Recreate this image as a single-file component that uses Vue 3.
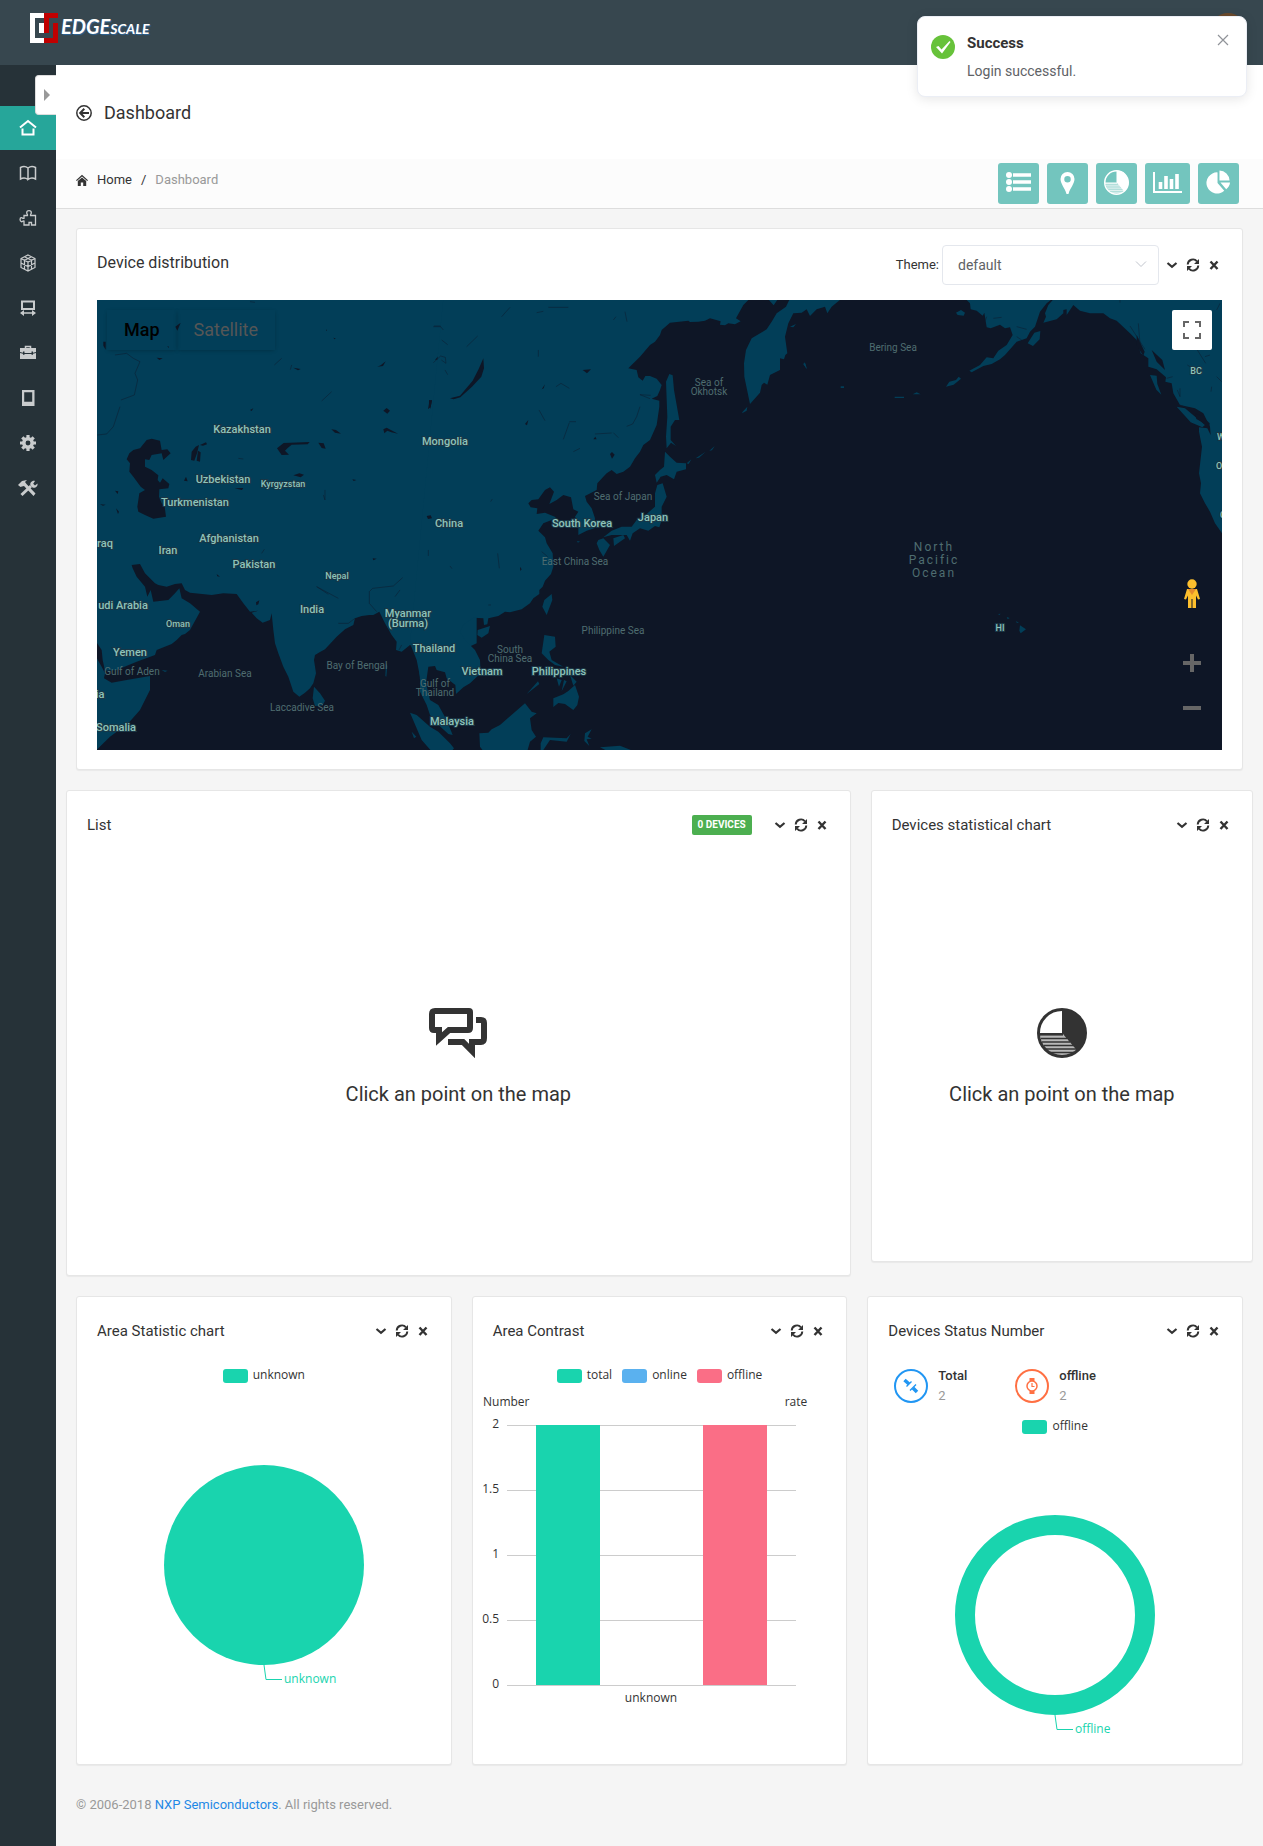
<script setup>
import { ref } from 'vue'

const theme = ref('default')

const navItems = ['home', 'book', 'puzzle', 'cube', 'device', 'case', 'tablet', 'gear', 'tools']

// Label positions in the map's own units
const countries = [
  ['Kazakhstan', 145, 133], ['Mongolia', 348, 145], ['Uzbekistan', 126, 183],
  ['Turkmenistan', 98, 206], ['China', 352, 227], ['Afghanistan', 132, 242],
  ['Iran', 71, 254], ['Pakistan', 157, 268], ['India', 215, 313],
  ['Myanmar', 311, 317], ['(Burma)', 311, 327], ['Thailand', 337, 352],
  ['Vietnam', 385, 375], ['Philippines', 462, 375], ['Malaysia', 355, 425],
  ['South Korea', 485, 227], ['Japan', 556, 221], ['udi Arabia', 26, 309],
  ['Yemen', 33, 356], ['Somalia', 19, 431], ['raq', 8, 247], ['ia', 3, 398]
]
const smallPlaces = [
  ['Kyrgyzstan', 186, 187], ['Nepal', 240, 279], ['Oman', 81, 327],
  ['BC', 1099, 74], ['HI', 903, 331], ['W', 1124, 140], ['O', 1122, 169], ['C', 1126, 218]
]
const waters = [
  ['Gulf of Aden', 35, 375], ['Arabian Sea', 128, 377], ['Bay of Bengal', 260, 369],
  ['Laccadive Sea', 205, 411], ['Gulf of', 338, 387], ['Thailand', 338, 396],
  ['South', 413, 353], ['China Sea', 413, 362], ['Philippine Sea', 516, 334],
  ['East China Sea', 478, 265], ['Sea of Japan', 526, 200], ['Sea of', 612, 86],
  ['Okhotsk', 612, 95], ['Bering Sea', 796, 51]
]

const green = '#19d4ae'
const legend = [
  { name: 'total', color: green },
  { name: 'online', color: '#5ab1ef' },
  { name: 'offline', color: '#fa6e86' }
]
const ticks = [2, 1.5, 1, 0.5, 0]
const bars = [
  { x: 63, value: 2, color: green },
  { x: 230, value: 2, color: '#fa6e86' }
]
</script>

<template>
  <svg class="defs" aria-hidden="true">
    <symbol id="i-down" viewBox="0 0 16 16"><path d="M3.500 6 8 9.800 12.500 6" fill="none" stroke="currentColor" stroke-width="2.200" /></symbol>
    <symbol id="i-refresh" viewBox="0 0 16 16">
      <path d="M2.700 7.500A5.300 5.300 0 0 1 12 4.300M13.300 8.500A5.300 5.300 0 0 1 4 11.700" fill="none" stroke="currentColor" stroke-width="1.900" />
      <path d="M14 2v5H9zM2 14V9h5z" fill="currentColor" />
    </symbol>
    <symbol id="i-close" viewBox="0 0 16 16"><path d="M4.500 4.500l7 7.500M11.500 4.500l-7 7.500" fill="none" stroke="currentColor" stroke-width="2.400" /></symbol>

    <symbol id="i-home" viewBox="0 0 20 20"><path d="M2 9.500 10 3l8 6.500M4.500 10.500v6h11v-6" fill="none" stroke="currentColor" stroke-width="2" /></symbol>
    <symbol id="i-book" viewBox="0 0 20 20"><path d="M10 5C8 3.500 4.500 3.500 2.500 4.500v11.500C4.500 15 8 15 10 16.500M10 5c2-1.500 5.500-1.500 7.500-.5v11.500c-2-1-5.500-1-7.500.5z M10 5v11" fill="none" stroke="currentColor" stroke-width="1.500" /></symbol>
    <symbol id="i-puzzle" viewBox="0 0 20 20"><path d="M6 7.500h3.500c.5-1-.8-1.300-.8-2.800 0-2.800 4.600-2.800 4.600 0 0 1.500-1.300 1.800-.8 2.800H17.500v9.500h-4v-2.500h-2.500V17H6v-4c-1.200-.5-1.500 1-2.600.7-1.800-.5-1.800-4 0-4 1.100 0 1.400 1 2.600.6z" fill="none" stroke="currentColor" stroke-width="1.300" /></symbol>
    <symbol id="i-cube" viewBox="0 0 20 20"><path d="M10 2l7 3.500v9L10 18l-7-3.500v-9zM3 5.500 10 9l7-3.500M10 9v9M6.500 3.800l7 3.500v9M13.500 3.800l-7 3.500v9M3 10l7 3.500L17 10" fill="none" stroke="currentColor" stroke-width="1.200" /></symbol>
    <symbol id="i-device" viewBox="0 0 20 20"><path d="M4 3.500h12v7.500H4z" fill="none" stroke="currentColor" stroke-width="2" /><path d="M3.500 15h13" fill="none" stroke="currentColor" stroke-width="1.500" /><path d="M2 15l4-3v6zM18 15l-4-3v6z" fill="currentColor" /></symbol>
    <symbol id="i-case" viewBox="0 0 20 20"><path d="M7.500 5V3.500h5V5" fill="none" stroke="currentColor" stroke-width="1.500" /><path d="M2 5h16v4l-3 .8V8.500h-1.500v1.600h-7V8.500H5v1.300L2 9zM2 10l3 .8v1h1.500v-.7h7v.7H15v-1l3-.8v6H2z" fill="currentColor" /></symbol>
    <symbol id="i-tablet" viewBox="0 0 20 20"><path fill-rule="evenodd" d="M4 2h12.500v16H4zM6.200 4.200v9.600h8V4.200z" fill="currentColor" /></symbol>
    <symbol id="i-gear" viewBox="0 0 20 20"><path d="M10 2v16M2 10h16M4.300 4.300l11.400 11.400M15.700 4.300 4.300 15.700" stroke="currentColor" stroke-width="3.200" /><circle cx="10" cy="10" r="4.200" fill="#263238" stroke="currentColor" stroke-width="3.500" /></symbol>
    <symbol id="i-tools" viewBox="0 0 20 20"><path d="M0 7l4-4 5-1-2 2 1.500 2L17.500 15.500 15.500 18 6 8 4 8.500 2.500 9z" fill="currentColor" /><path d="M3.500 17 13 8" stroke="currentColor" stroke-width="3" /><path d="M19.500 5.500 17 7.500l-1.800-1.800L17 3c-3-.8-5.500 2-4.500 4.500l2 2c2.800 1 5.500-1 5-4z" fill="currentColor" /></symbol>

    <symbol id="i-pie" viewBox="0 0 50 50">
      <circle cx="25" cy="25" r="23.500" fill="none" stroke="currentColor" stroke-width="3" />
      <path d="M25 25V1a24 24 0 0 1 15.500 42z" fill="currentColor" />
      <path d="M2 26.300h24" stroke="currentColor" stroke-width="2.600" />
      <path d="M3 27h24l14 14-9 7H17Q5 42 3 27z" fill="currentColor" opacity=".35" />
      <path d="M4 30.500h26M5 34h28M7 37.500h30M9 41h31M13 44.500h24" stroke="currentColor" stroke-width="1.300" />
    </symbol>
  </svg>

  <div class="page">
    <header class="topbar">
      <a class="logo" href="#" aria-label="EdgeScale">
        <svg width="28" height="30" viewBox="0 0 28 30">
          <path d="M14 0H0v30h14v-5H5V5h9z" fill="#fff" /><path d="M9 10h5v10H9z" fill="#fff" />
          <path d="M14 0h14v5h-9v15h-5zM23 10h5v20H14v-5h9z" fill="#c00000" />
        </svg>
        <span class="brand">EDGE<small>SCALE</small></span>
      </a>
      <span class="avatar"></span>
    </header>

    <div class="shell">
      <nav class="sidebar">
        <button class="handle" aria-label="Expand menu"><svg width="6" height="12"><path d="M0 0l6 6-6 6z" fill="#999" /></svg></button>
        <a v-for="(item, i) in navItems" :key="item" href="#" :class="['nav', { active: i === 0 }]" :aria-label="item">
          <svg width="20" height="20"><use :href="'#i-' + item" /></svg>
        </a>
      </nav>

      <main class="main">
        <div class="heading">
          <svg width="16" height="16" viewBox="0 0 16 16" fill="none" stroke="currentColor"><circle cx="8" cy="8" r="7.200" stroke-width="1.500" /><path d="M13 8H4.500M8.300 3.800 4.200 8l4.100 4.200" stroke-width="2" /></svg>
          <h1>Dashboard</h1>
        </div>

        <div class="crumbbar">
          <div class="crumbs">
            <svg width="12" height="12" viewBox="0 0 12 12"><path d="M0 6.200 6 .8l6 5.400-.8.800L6 2.500.8 7z" fill="currentColor" /><path d="M1.800 7 6 3.500 10.200 7v5H7.200V8.500H4.800V12h-3z" fill="currentColor" /></svg>
            <a href="#">Home</a><span>/</span><span class="muted">Dashboard</span>
          </div>
          <div class="shortcuts">
            <button aria-label="List"><svg width="25" height="20" viewBox="0 0 25 20"><g fill="#fff"><circle cx="3" cy="3" r="3" /><circle cx="3" cy="10" r="3" /><circle cx="3" cy="17" r="3" /></g><path d="M7 3h18M7 10h18M7 17h18" stroke="#fff" stroke-width="3.600" /></svg></button>
            <button aria-label="Map"><svg width="25" height="22" viewBox="0 0 25 22"><path fill-rule="evenodd" d="M12.500 0a7 7 0 0 1 7 7c0 5-4.500 9-6 15h-2c-1.500-6-6-10-6-15a7 7 0 0 1 7-7zm0 4a3 3 0 1 0 0 6.500 3 3 0 0 0 0-6.500z" fill="#fff" /></svg></button>
            <button class="low" aria-label="Statistical chart"><svg width="25" height="25"><use href="#i-pie" /></svg></button>
            <button aria-label="Bars"><svg width="29" height="21" viewBox="0 0 29 21"><path d="M1 0v20h28" fill="none" stroke="#fff" stroke-width="2" /><path d="M7.500 17v-7M13 17V4M18.500 17V7M24 17V2" stroke="#fff" stroke-width="3.600" /></svg></button>
            <button class="low" aria-label="Pie"><svg width="25" height="24" viewBox="0 0 26 24"><path d="M12 2v11l7 8A11 11 0 1 1 12 2zM14 0a11 11 0 0 1 10.500 10.500H14zM15 12.500h10a10 10 0 0 1-4 7z" fill="#fff" /></svg></button>
          </div>
        </div>

        <div class="content">
          <section class="card">
            <div class="card-head">
              <h2 class="lead">Device distribution</h2>
              <div class="tools">
                <label for="theme">Theme:</label>
                <span class="select">
                  <select id="theme" v-model="theme"><option>default</option></select>
                  <svg width="12" height="7" viewBox="0 0 12 7"><path d="M1 .5l5 5 5-5" fill="none" stroke="#c0c4cc" /></svg>
                </span>
                <button v-for="t in ['down', 'refresh', 'close']" :key="t" class="tool" :aria-label="t"><svg width="16" height="16"><use :href="'#i-' + t" /></svg></button>
              </div>
            </div>

            <div class="map">
              <svg class="world" viewBox="0 0 1125 450" preserveAspectRatio="xMidYMid slice" role="img" aria-label="World map">
                <g transform="translate(-7 -10) scale(.333333)">
                  <path class="land" d="M15 25H1160V1060L1010 1130 990 1170 985 1110 970 1070 960 1065 935 1085 918 1080 920 1055 905 1035 885 1000 868 965 850 975 838 975 815 978 795 985 790 1005 765 1018 740 1040 705 1078 690 1086 675 1095 672 1110 678 1150 670 1180 660 1195 645 1208 628 1220 610 1205 595 1160 580 1130 565 1090 555 1060 550 1020 545 970 540 990 518 998 500 985 485 968 505 962 480 965 460 940 440 912 400 910 365 915 300 908 285 900 275 880 255 882 230 890 205 885 195 880 180 865 165 850 150 822 125 825 128 835 140 860 165 890 172 920 182 900 190 935 235 930 255 910 268 895 275 925 300 940 330 965 300 1020 285 1032 275 1035 260 1050 245 1062 200 1080 195 1095 140 1115 80 1140 45 1142 38 1110 35 1080 15 1050z" />
                  <path class="land" d="M15 1095 35 1130 45 1150 42 1165 65 1178 110 1170 180 1158 180 1200 150 1260 115 1300 60 1340 15 1384z" />
                  <path class="land" d="M672 1190 690 1210 705 1232 698 1246 675 1248 668 1225zM215 1140l18 2-8 4z M888 1118l4 10-3 32-3-2z" />
                  <path class="water" d="M170 450 185 446 210 452 215 480 232 478 242 490 220 510 215 490 185 495 178 510 165 508 165 530 185 540 205 556 203 570 210 578 218 565 238 582 235 595 208 598 207 620 215 640 224 650 228 680 190 686 165 675 145 665 142 650 148 610 165 600 152 590 130 560 118 545 120 520 110 508 118 490 130 480 150 475z" />
                  <path class="water" d="M303 510l2-25 12-15 10-5-6 25-8 22zM320 512l4-30 8 5-2 28zM330 465l18-8 3 6-12 4zM575 495l-14-20 20-16 78-3-6 7-48 1-12 10-8 8 12 12zM610 556l18-6 14 4-10 8zM724 418l14 2 15 11-18-3zM685 458l16 2 6 16-12-2zM1080 325l30-9 30-35v18l-22 22-22 8zM1017 330l9 1-5 25-4-6zM880 362l10-8 10 8-8 9zM880 418l10-5 14 8 20 10-20-4-12-5-9 8zM1035 210l12-14 18 2 2 16-8-12-12 6zM282 572l6-12 5 14zM862 230l10-4 15-12-8 14zM256 110l16-12-10 24zM40 155h7v24l-7-12zM610 233l22 4-8 4zM480 360l10-5-5 8zM1010 678l10-4 6 8-8 4zM498 937l10-6-3 12-6 3zM848 805l12 1-10 5zM380 852l10 8-8-1zM30 643l17 1-8 3zM75 602l10 2-2 8zM78 655l9 10-3 7zM200 203l18 2-10 5zM787 568l12 2-8 3zM434 595l26-1-4 6zM232 168l5 2-2 4zM708 118l3 3-2 3zM730 143l7 2-3 3z" />
                  <path class="river" d="M75 195l35-5 20 15 20 10-15 35 8 20-10 45-40 15M90 350l-20 60-20 22-28 3M575 205l-22 20M725 305l-30 28M1032 108l20 0 8 12M745 925l-65-35 35 23M860 965l-22-25v-35l10-10 62-7 28-25M445 505l15 2M705 600v30l-5-15M515 790l8-12M745 1000h30l20-15M480 35l15 2M915 920l15-20M605 225l-4 14M935 1065l-8 15" />
                </g>
                <g transform="translate(313 -10) scale(.333333)">
                  <path class="land" d="M100 25H1020L1000 45 978 85 992 94 975 103 955 100 945 106 930 104 932 94 900 85 885 92 865 95 840 96 835 92 780 98 755 120 750 135 735 155 720 165 690 200 655 235 680 240 685 262 698 272 706 258 720 258 740 266 755 285 750 300 742 318 725 326 748 332 748 350 740 405 720 450 700 465 690 485 675 505 660 530 640 545 620 552 605 540 590 550 580 560 562 580 560 600 525 618 530 635 545 655 555 685 553 715 530 722 505 735 505 700 495 680 505 665 490 658 483 622 460 615 440 630 418 642 432 605 420 592 405 600 385 628 365 630 355 640 362 652 382 655 380 672 405 668 438 682 425 690 400 700 385 722 405 742 410 760 428 790 430 830 423 852 405 872 398 890 388 900 388 912 370 925 360 940 335 958 300 967 285 965 265 978 235 985 232 1003 222 1005 220 985 190 983 160 1005 150 1025 165 1050 195 1080 210 1110 212 1150 180 1180 160 1192 138 1212 136 1185 110 1165 105 1147 80 1140 75 1128 55 1130 48 1180 60 1230 85 1245 110 1290 128 1335 115 1332 80 1300 60 1275 50 1245 30 1205 30 1160 20 1110 0 1060z" />
                  <path class="land" d="M1075 28h28l-12 18zM1140 25 1128 50 1100 70 1085 95 1070 118 1025 145 1008 180 1002 220 1003 260 1020 342 1050 308 1055 285 1062 278 1072 284 1080 255 1110 240 1110 205 1122 208 1126 195 1132 190 1125 140 1135 100 1150 70 1175 68 1190 58 1200 78 1220 58 1245 50 1252 70 1265 50 1292 28V25z" />
                  <path class="land" d="M778 252 788 256 792 300 808 390 795 390 782 410 782 450 798 468 783 458 770 475 768 440 772 380 768 275z" />
                  <path class="land" d="M765 485 780 500 800 518 828 520 828 538 800 545 792 568 770 555 752 560 740 578 735 555 750 540 762 530z" />
                  <path class="land" d="M742 585 758 580 770 620 755 650 755 690 748 712 735 708 715 722 690 715 668 730 660 752 650 735 605 735 580 742 605 722 635 710 665 710 680 690 710 672 735 650 735 610z M610 745 640 735 645 745 612 768z M565 750 580 745 600 765 580 800 568 780 560 760z" />
                  <path class="land" d="M403 930 425 912 427 930 410 975 397 950z M203 1020 240 1008 235 1030 215 1043 202 1035z M403 1035 435 1040 437 1070 418 1085 425 1110 460 1130 435 1125 415 1110 395 1090z" />
                  <path class="land" d="M440 1165l15 5-8 20zM462 1170l8 4-15 30zM480 1155l20 20-10 12zM430 1225l30-12 15-10 20-18 12 35-5 25-12 15-25-18-20-3-15 12zM350 1212l34-38 4 8z" />
                  <path class="land" d="M345 1240 365 1265 380 1270 360 1285 365 1320 378 1340 360 1355 350 1390H225L210 1370 208 1330 235 1328 245 1318 270 1305z M0 1268 20 1275 60 1310 85 1325 120 1360 132 1375 120 1390H70L35 1350z M5 1325l14 15-7 5z M392 1360 400 1342 470 1345 482 1332 470 1355 420 1350 400 1380h-8z M525 1330l20-12-12 22 12 6-15 2 8 20-15-15z M570 1372l60-5 50 20H600z" />
                  <path class="land" d="M830 520l14-12-8 14zM857 505l30-20-20 18zM898 482l16-14-8 13zM985 388l5-7zM998 365l14-15-2 12-14 8zM1140 110l18-8-8 10zM1180 222l4-5 6 20zM500 754h10l-6 4zM552 855l6-3z" />
                  <path class="water" d="M518 240l25-2-12 12zM600 492l6-6 8 8-8 12zM50 678l12-2 4 9-12 2zM345 402l10-12-4 16zM58 335l8-5-4 20-8 8zM395 298l10-15-4 12zM550 448h10l-4-8zM330 830l5 8-4 5zM120 325l30-8 38-45 18-35 14-32 2 30-8 25-28 30-35 32-20 6z" />
                  <path class="river" d="M275 80l25-28M380 68l20-4M415 52h60M645 65l6 30M690 350l-10 30-12 22-18 7M478 395h20M478 398l-18 50M555 432l50-3M610 428l15 15M387 360l18 32M438 290l15-10 25 15M170 170l33-32M70 110h22l8 10M95 150l18 14M70 218l22-20 14 4 2 18-14-10M105 240l8 14M610 90l8-10M490 485l20-10M263 790l5 45M385 180v20M120 828l6 8M235 945h8M242 635l5-8M55 780v18M395 785l18 15M720 326l-30-12 32 2" />
                </g>
                <g transform="translate(703 -10) scale(.333333)">
                  <path class="land" d="M495 25 510 40 512 58 530 62 548 77 553 68 560 112 572 115 600 104 615 115 630 112 638 135 620 165 595 182 580 205 560 202 540 225 508 242 515 247 550 228 575 222 600 208 615 195 650 155 680 145 690 125 705 110 720 65 740 40 755 28zM760 28 745 45 735 70 738 80 730 98 770 88 790 70 790 60 800 58 800 75 820 45 840 62 870 70 910 70 930 85 950 92 990 130 1010 150 1022 190 1045 205 1045 230 1070 238 1098 262 1096 275 1115 280 1120 310 1140 345 1185 355 1210 370 1230 410 1232 435 1222 415 1197 412 1197 425 1206 470 1197 550 1203 580 1200 610 1215 640 1230 665 1245 700 1270 735V25z" />
                  <path class="land" d="M468 68l15-8 12 8-4 9-18-2zM683 160l20-32 18-5-2 25-20 20zM438 290l10-15 20-5 8-10 7 6-22 18zM1050 255l20 2 2 25 12 32-15-15zM1130 350l25 5 60 50-8 7-35-15zM660 1006l18 12-16 12-4-8zM594 972l8-1-4 4zM620 981l9 3-6 4zM647 994l10 3-6 2zM122 289h10v5h-10zM284 320h28v4h-28zM338 313l12-6 12 6zM10 222l6-2 5 18z" />
                  <path class="water" d="M1185 370l20 8 24 22-2 15-20-18-18-10zM1010 135l24 50-4 12-20-30zM1055 180l32 30 8 30-25-25z" />
                  <path class="river" d="M580 85l25-3M650 110l30 8M650 140l15 10M1015 100l5 60M990 108l45 70M1140 295v25l-8-20M1192 180l25 40M1215 200l15-5M1235 290l-2 15M1100 265l18-5M1250 260l15 15M1170 230l-8-5M1140 345l25 10M1250 60l10-20M960 30v8M560 80l-4 12" />
                </g>
                <text v-for="w in waters" :key="w[0] + w[1]" class="sea" :x="w[1]" :y="w[2]">{{ w[0] }}</text>
                <text class="ocean" x="837" y="251">North</text>
                <text class="ocean" x="837" y="264">Pacific</text>
                <text class="ocean" x="837" y="277">Ocean</text>
                <text v-for="c in countries" :key="c[0]" class="country" :x="c[1]" :y="c[2]">{{ c[0] }}</text>
                <text v-for="c in smallPlaces" :key="c[0]" class="country small" :x="c[1]" :y="c[2]">{{ c[0] }}</text>
              </svg>
              <div class="map-types"><button class="on">Map</button><button>Satellite</button></div>
              <button class="full" aria-label="Full screen"><svg width="18" height="18" viewBox="0 0 18 18"><path d="M1 6V1h5M12 1h5v5M17 12v5h-5M6 17H1v-5" fill="none" stroke="#666" stroke-width="2" /></svg></button>
              <div class="map-ctl">
                <button class="peg" aria-label="Street view"><svg width="16" height="30" viewBox="0 0 16 30"><circle cx="8" cy="5" r="4.700" fill="#fdbf2d" /><path d="M3 10h10l3 10-2 .5-2-4V29H8.500v-9h-1v9H4V16.500l-2 4L0 20z" fill="#fdbf2d" /><path d="M4 10h8l-4 6z" fill="#e58a2c" /></svg></button>
                <button class="zoom" aria-label="Zoom in"><svg width="18" height="18"><path d="M9 0v18M0 9h18" stroke="#666" stroke-width="4" /></svg></button>
                <button class="zoom" aria-label="Zoom out"><svg width="18" height="18"><path d="M0 9h18" stroke="#666" stroke-width="4" /></svg></button>
              </div>
            </div>
          </section>

          <div class="row wide">
            <section class="card">
              <div class="card-head">
                <h2>List</h2>
                <div class="tools">
                  <span class="badge">0 DEVICES</span>
                  <button v-for="t in ['down', 'refresh', 'close']" :key="t" class="tool" :aria-label="t"><svg width="16" height="16"><use :href="'#i-' + t" /></svg></button>
                </div>
              </div>
              <div class="empty tall">
                <svg width="58" height="50" viewBox="0 0 58 50" fill="none" stroke="#333" stroke-width="6"><path d="M6 3h34q1 0 1 1v16q0 2-2 2H20l-10 9v-9H5q-2 0-2-2V6q0-3 3-3z" /><path d="M47 12h5q3 0 3 3v15q0 4-3 4h-9v9l-9-9H19" /></svg>
                <p>Click an point on the map</p>
              </div>
            </section>
            <section class="card">
              <div class="card-head">
                <h2>Devices statistical chart</h2>
                <div class="tools">
                  <button v-for="t in ['down', 'refresh', 'close']" :key="t" class="tool" :aria-label="t"><svg width="16" height="16"><use :href="'#i-' + t" /></svg></button>
                </div>
              </div>
              <div class="empty">
                <svg width="50" height="50"><use href="#i-pie" /></svg>
                <p>Click an point on the map</p>
              </div>
            </section>
          </div>

          <div class="row thirds">
            <section class="card">
              <div class="card-head">
                <h2>Area Statistic chart</h2>
                <div class="tools">
                  <button v-for="t in ['down', 'refresh', 'close']" :key="t" class="tool" :aria-label="t"><svg width="16" height="16"><use :href="'#i-' + t" /></svg></button>
                </div>
              </div>
              <div class="legend"><span class="key"><i :style="{ background: green }"></i>unknown</span></div>
              <svg class="chart" width="372" height="358" viewBox="0 0 372 358">
                <circle cx="186" cy="179" r="100" :fill="green" />
                <path d="M186 279l2 14.500h16" fill="none" :stroke="green" />
                <text x="206" y="297" :fill="green">unknown</text>
              </svg>
            </section>

            <section class="card">
              <div class="card-head">
                <h2>Area Contrast</h2>
                <div class="tools">
                  <button v-for="t in ['down', 'refresh', 'close']" :key="t" class="tool" :aria-label="t"><svg width="16" height="16"><use :href="'#i-' + t" /></svg></button>
                </div>
              </div>
              <div class="legend"><span v-for="l in legend" :key="l.name" class="key"><i :style="{ background: l.color }"></i>{{ l.name }}</span></div>
              <svg class="chart" width="372" height="358" viewBox="0 0 372 358">
                <text x="10" y="20">Number</text>
                <text x="323" y="20" text-anchor="middle">rate</text>
                <g v-for="(t, i) in ticks" :key="t">
                  <path :d="`M34 ${39.5 + i * 65}h289`" stroke="#ccc" />
                  <text x="26" :y="42 + i * 65" text-anchor="end">{{ t }}</text>
                </g>
                <rect v-for="b in bars" :key="b.x" :x="b.x" :y="299 - b.value * 130" width="64" :height="b.value * 130" :fill="b.color" />
                <text x="178" y="316" text-anchor="middle">unknown</text>
              </svg>
            </section>

            <section class="card">
              <div class="card-head">
                <h2>Devices Status Number</h2>
                <div class="tools">
                  <button v-for="t in ['down', 'refresh', 'close']" :key="t" class="tool" :aria-label="t"><svg width="16" height="16"><use :href="'#i-' + t" /></svg></button>
                </div>
              </div>
              <div class="stats">
                <div class="stat">
                  <span class="ring blue"><svg width="16" height="16" viewBox="0 0 16 16" fill="none" stroke="currentColor"><path d="M1.500 2 6 6M10 10l4 4" stroke-width="3.500" /><path d="M3.500 8.500l5-5M7 12.500l6-6" stroke-width="1.400" /></svg></span>
                  <div><b>Total</b><span>2</span></div>
                </div>
                <div class="stat">
                  <span class="ring orange"><svg width="16" height="16" viewBox="0 0 16 16" fill="none" stroke="currentColor"><path d="M5.500 0h5v3h-5zM5.500 13h5v3h-5z" fill="currentColor" stroke="none" /><circle cx="8" cy="8" r="5" stroke-width="1.500" /><path d="M8 5v3.500h2.500" stroke-width="1.200" /></svg></span>
                  <div><b>offline</b><span>2</span></div>
                </div>
              </div>
              <div class="legend"><span class="key"><i :style="{ background: green }"></i>offline</span></div>
              <svg class="chart" width="372" height="307" viewBox="0 0 372 307">
                <circle cx="186" cy="178" r="90" fill="none" :stroke="green" stroke-width="20" />
                <path d="M186 278l2 14.500h16" fill="none" :stroke="green" />
                <text x="206" y="296" :fill="green">offline</text>
              </svg>
            </section>
          </div>

          <footer>© 2006-2018 <a href="#">NXP Semiconductors</a>. All rights reserved.</footer>
        </div>
      </main>
    </div>

    <div class="toast" role="alert">
      <svg width="24" height="24" viewBox="0 0 24 24"><circle cx="12" cy="12" r="12" fill="#67c23a" /><path d="M5 12l2.500-1 3 3.500L18.500 6l1 1L11 18.500z" fill="#fff" /></svg>
      <div class="toast-text"><strong>Success</strong><p>Login successful.</p></div>
      <button aria-label="Close"><svg width="12" height="12"><path d="M1 1l10 10M11 1 1 11" stroke="#909399" stroke-width="1.200" /></svg></button>
    </div>
  </div>
</template>

<style>
body { margin: 0; background: #f5f5f5; }
</style>

<style scoped>
* { box-sizing: border-box; }
.defs { position: absolute; width: 0; height: 0; }
.page { position: relative; display: flex; flex-direction: column; min-height: 100vh; font: 13px/20px Roboto, "Liberation Sans", sans-serif; color: #333; }
svg { display: block; flex: none; }
button { padding: 0; border: 0; background: none; font: inherit; color: inherit; display: flex; align-items: center; justify-content: center; cursor: pointer; }
a { color: inherit; text-decoration: none; }
h1, h2, p { margin: 0; font-weight: 400; }

.topbar { height: 65px; background: #37474f; display: flex; justify-content: space-between; align-items: flex-start; padding: 11px 18px 0 30px; }
.logo { display: flex; align-items: center; gap: 3px; }
.brand { font: italic 700 20px/30px Lato, sans-serif; color: #fff; text-shadow: 1px 1px 1px #2c6598; }
.brand small { font-size: 14px; }
.avatar { width: 34px; height: 34px; margin-top: 2px; border-radius: 50%; background: #6b4a2c; }

.shell { display: flex; flex: 1; }
.sidebar { position: relative; width: 56px; flex: none; background: #263238; padding-top: 41px; display: flex; flex-direction: column; gap: 1px; color: #c9cccd; }
.nav { height: 44px; display: flex; align-items: center; justify-content: center; }
.nav.active { background: #26a69a; color: #fff; }
.handle { position: absolute; top: 10px; right: 0; width: 21px; height: 40px; padding-left: 2px; background: #fff; border: 1px solid #ddd; border-right: 0; border-radius: 4px 0 0 4px; }

.main { flex: 1; min-width: 0; }
.heading { height: 94px; background: #fff; display: flex; align-items: center; gap: 12px; padding: 2px 20px 0; }
.heading h1 { font-size: 18px; line-height: 28px; }
.crumbbar { height: 50px; background: #fcfcfc; border-bottom: 1px solid #ddd; display: flex; justify-content: space-between; padding: 0 24px 0 20px; }
.crumbs { display: flex; align-items: center; height: 42px; gap: 9px; }
.crumbs .muted { color: #999; }
.shortcuts { display: flex; align-items: center; gap: 8px; color: #fff; }
.shortcuts button { height: 41px; padding: 9px 8px 0; background: #73c5be; border-radius: 3px; align-items: flex-start; }
.shortcuts .low { padding-top: 7px; }

.content { padding: 19px 10px 0; }
.card { background: #fff; border: 1px solid #e6e6e6; border-radius: 3px; box-shadow: 0 1px 1px rgba(0, 0, 0, .05); min-width: 0; }
.content > .card { margin: 0 10px; padding-bottom: 19px; }
.card-head { height: 71px; padding: 16px 20px 0; display: flex; align-items: flex-start; justify-content: space-between; }
h2 { font-size: 15px; line-height: 36px; white-space: nowrap; }
h2.lead { font-size: 16px; }
.tools { display: flex; align-items: center; gap: 5px; min-height: 36px; }
.tool { width: 16px; height: 16px; }
.tools label { margin-right: -2px; }
.select { position: relative; width: 217px; }
.select select { display: block; width: 100%; height: 40px; padding: 0 15px; border: 1px solid #e4e7ed; border-radius: 4px; background: #fff; color: #606266; font: 14px Roboto, sans-serif; appearance: none; }
.select svg { position: absolute; right: 12px; top: 16px; }
.badge { background: #4caf50; color: #fff; font-size: 10px; font-weight: 700; border-radius: 2px; padding: 0 6px; margin-right: 15px; white-space: nowrap; }

.map { position: relative; height: 450px; margin: 0 20px; background: #0e1626; overflow: hidden; }
.world { width: 100%; height: 450px; }
.land { fill: #023e58; }
.water { fill: #0e1626; }
.river { fill: none; stroke: #0e1c30; stroke-width: 2; opacity: .8; }
.world text { text-anchor: middle; paint-order: stroke; }
.country { font-size: 11px; font-weight: 500; fill: #8ec3b9; stroke: #1a3646; stroke-width: 2px; }
.country.small { font-size: 9px; }
.sea { font-size: 10px; fill: #4e6d70; }
.ocean { font-size: 12px; fill: #4e6d70; letter-spacing: 2px; }
.map-types { position: absolute; left: 10px; top: 10px; display: flex; }
.map-types button { height: 40px; padding: 0 17px; font-size: 18px; color: #565656; box-shadow: 0 1px 4px -1px rgba(0, 0, 0, .3); }
.map-types .on { color: #000; font-weight: 500; }
.full { position: absolute; right: 10px; top: 10px; width: 40px; height: 40px; background: #fff; border-radius: 2px; }
.map-ctl { position: absolute; right: 10px; bottom: 20px; width: 40px; }
.map-ctl button { width: 40px; }
.peg { height: 40px; margin-bottom: 26px; }
.zoom { height: 45px; }

.row { display: grid; gap: 20px; margin-top: 20px; }
.wide { grid-template-columns: minmax(0, 1fr) calc((100% + 20px) / 3 - 20px); align-items: start; }
.thirds { grid-template-columns: repeat(3, minmax(0, 1fr)); margin: 20px 10px 0; }
.thirds .card-head { height: 69px; }
.empty { display: flex; flex-direction: column; align-items: center; gap: 20px; padding: 146px 20px 151px; }
.empty.tall { padding-bottom: 165px; }
.empty p { font-size: 20px; line-height: 32px; }

.legend { display: flex; justify-content: center; gap: 10px; height: 20px; font: 12px/18px "Open Sans", "Noto Sans", sans-serif; }
.key { display: flex; gap: 5px; }
.key i { width: 25px; height: 14px; margin-top: 3px; border-radius: 3px; }
.chart { margin: 0 auto 20px; max-width: 100%; font: 12px "Open Sans", "Noto Sans", sans-serif; fill: #333; }
.stats { display: flex; height: 51px; padding-left: 26px; }
.stat { display: flex; width: 121px; gap: 10px; }
.ring { width: 34px; height: 34px; margin-top: 3px; border: 2px solid; border-radius: 50%; display: flex; align-items: center; justify-content: center; }
.ring.blue { color: #2196f3; }
.ring.orange { color: #ff7043; }
.stat b, .stat div span { display: block; }
.stat b { font-weight: 500; }
.stat div span { color: #999; }

footer { padding: 30px 10px; color: #999; }
footer a { color: #1e88e5; }

.toast { position: absolute; top: 16px; right: 16px; width: 330px; height: 81px; background: #fff; border: 1px solid #ebeef5; border-radius: 8px; box-shadow: 0 2px 12px rgba(0, 0, 0, .1); padding: 14px 17px 0 13px; display: flex; align-items: flex-start; }
.toast > svg { margin-top: 4px; }
.toast-text { flex: 1; padding-left: 12px; }
.toast strong { display: block; font-size: 15px; line-height: 24px; }
.toast p { font-size: 14px; line-height: 20px; color: #606266; margin-top: 6px; }
.toast button { margin-top: 3px; }
</style>
